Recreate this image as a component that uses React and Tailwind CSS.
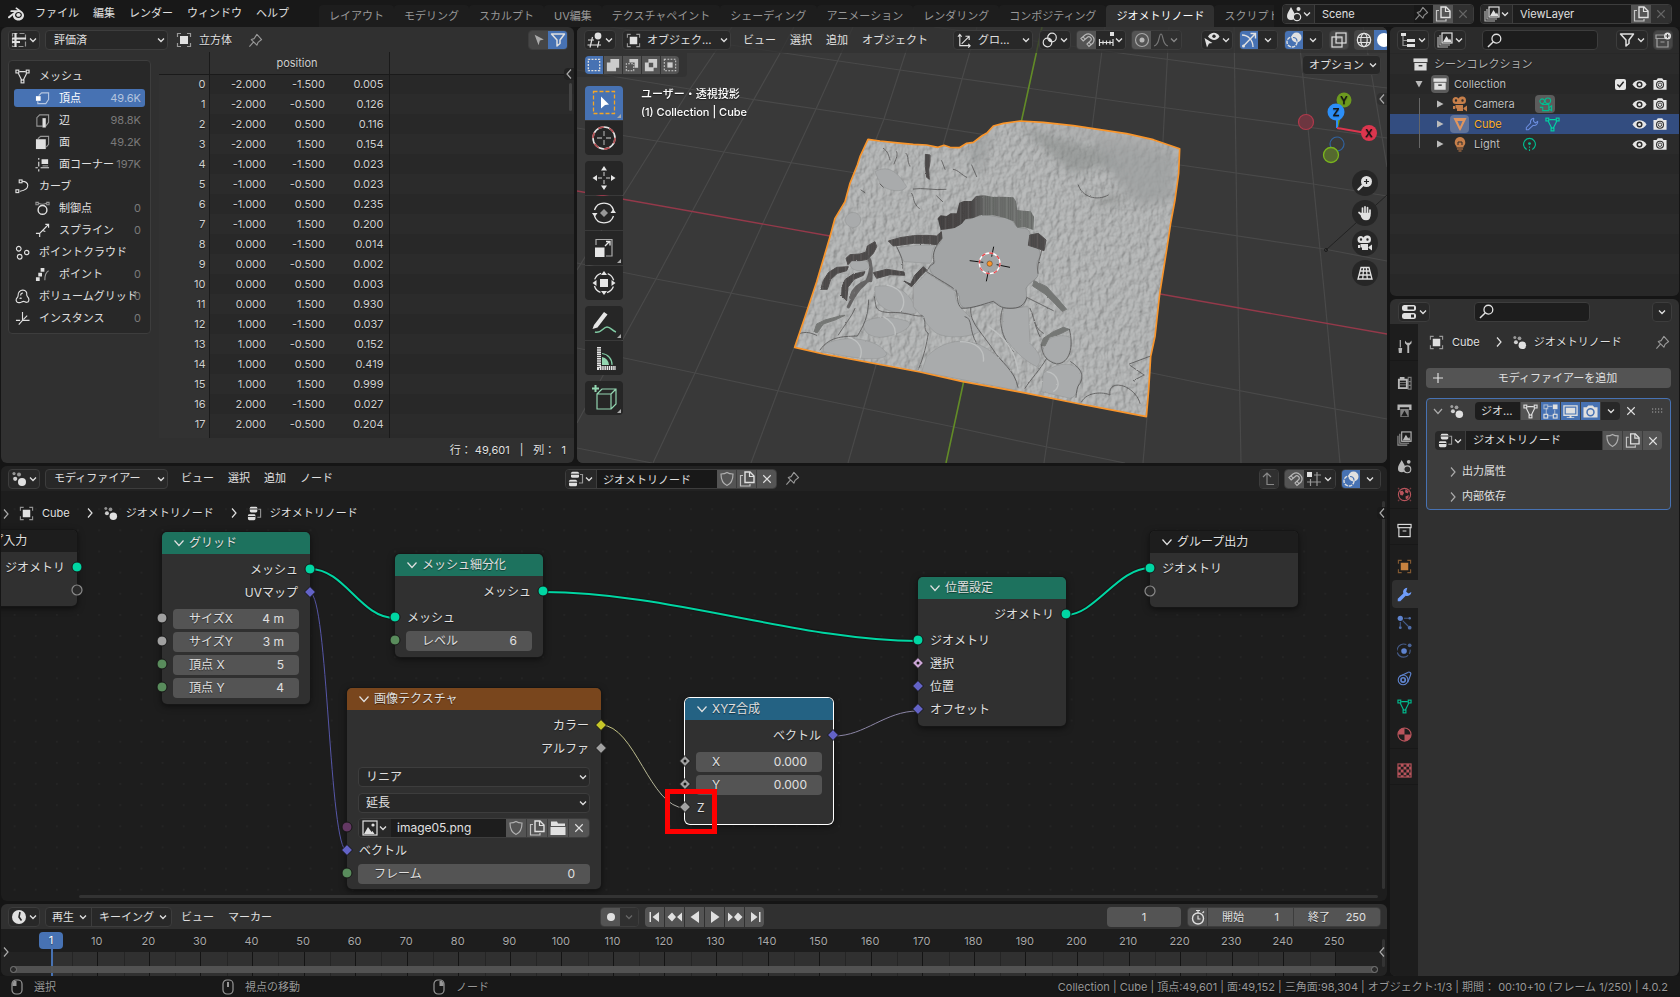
import React from "react";
import { SiBlender } from "react-icons/si";

/* ---------- icons (16 x 16 grid) ---------- */

const line = { fill: "none", stroke: "currentColor", strokeWidth: 1.2 };
const dim = { fill: "none", stroke: "currentColor", strokeWidth: 1.2, opacity: 0.6 };

const icons = {
  sheet: (
    <>
      <rect x="1.5" y="1.5" width="13" height="13" {...dim} strokeDasharray="5 2" />
      <path d="M4.5 1v14M1 6.500h14M1 10h8" fill="none" stroke="currentColor" strokeWidth="2.200" />
    </>
  ),
  object: (
    <>
      <path d="M1.500 5V1.500H5M11 1.500h3.500V5M14.500 11v3.500H11M5 14.500H1.500V11" {...dim} />
      <rect x="4" y="4" width="8" height="8" fill="currentColor" />
    </>
  ),
  pin: <path d="M1.500 14.500l4.500-5M3.500 7l6 6 1.200-3L14.500 7 9.500 1.500 6.500 6z" {...line} strokeLinejoin="round" />,
  cursor: <path d="M3 2l10.500 5.500-4.500 1L7.500 14z" fill="currentColor" />,
  filter: <path d="M1.500 2h13L10 8v3.500L7 14V8z" {...line} strokeWidth="1.500" strokeLinejoin="round" />,
  mesh: (
    <>
      <path d="M4.500 2.800h7M3.500 4.500l3.700 7.500M12.500 4.500l-3.700 7.500" {...line} />
      <rect x="1" y="1.200" width="3" height="3" {...line} />
      <rect x="12" y="1.200" width="3" height="3" {...line} />
      <rect x="6.500" y="11.800" width="3" height="3" {...line} />
    </>
  ),
  vertex: (
    <>
      <path d="M4 5L7 2h7.500v7l-3 4.500H3V11" {...dim} />
      <rect x="1" y="5.500" width="5" height="5" fill="currentColor" />
    </>
  ),
  edge: (
    <>
      <path d="M8 14H2V5l3-3h9.500v8l-3 4" {...dim} />
      <rect x="8" y="5.500" width="3.500" height="10" fill="currentColor" />
    </>
  ),
  face: (
    <>
      <path d="M3 4l3-2.500h8.500V10L12 13" {...dim} />
      <rect x="1" y="4.500" width="10.500" height="10.500" fill="currentColor" />
    </>
  ),
  corner: (
    <>
      <path d="M4 1v2M4 5v5M4 13v2.500M0.500 11.500H3M6 11.500h9" {...line} />
      <path d="M7 7.500V2.500h7v5z" fill="currentColor" />
      <path d="M8 9.500h6" {...dim} />
    </>
  ),
  curve: (
    <>
      <path d="M7.500 2.500c8-.5 9 9-2 10.500H5" {...line} />
      <rect x="4.500" y="1" width="3" height="3" {...line} />
      <rect x="1" y="11.500" width="3" height="3" {...line} />
    </>
  ),
  control: (
    <>
      <circle cx="8" cy="9.500" r="4.700" {...line} strokeWidth="1.500" />
      <path d="M4 2.500c3 1.500 5 1.500 8 0" {...dim} />
      <path d="M1 1.500h2.500V4H1zM12.500 1.500H15V4h-2.500z" {...dim} />
    </>
  ),
  spline: <path d="M1 11h4v4M5 11l7-7M8 8l3 1M11 1.500h3.500V5M14.500 1.500L11.500 4.500" {...line} />,
  cloud: (
    <>
      <circle cx="4" cy="4" r="2.500" {...line} />
      <circle cx="12.500" cy="8" r="2.300" {...line} />
      <circle cx="5" cy="12.500" r="2.500" {...line} />
    </>
  ),
  point: (
    <>
      <path d="M6 1h4v4H6zM3.500 6h4v4h-4zM1 11h4v4H1z" fill="currentColor" />
      <path d="M14.500 4c-3 1.500-4 5-4 10" {...dim} />
    </>
  ),
  volume: (
    <path
      d="M5 14.500c-3 .500-4.500-2-3.500-4s2-2 1.800-3.500C3 4 5.500 1 8.500 1.200s4.500 2.300 4 4.800c-.2 1.200.5 1.800 1.500 3 1.800 2.500.5 5-1.500 5.200-1.500.2-2.200-1-3.500-1s-2.500 1.200-4 1.300zM6 7c0-1.800 1-2.800 2.500-2.800M5 10.500c.5-1 1.500-1 2.300-.5"
      {...line}
    />
  ),
  instance: <path d="M8 1v9M8 10h7.500M1 10h4.500M8 10l-4 4.500M9 9l4-4" {...line} />,
  nodes: (
    <>
      <circle cx="3" cy="2.600" r="1.600" fill="currentColor" opacity=".6" />
      <circle cx="8" cy="3.500" r="2" fill="currentColor" opacity=".6" />
      <circle cx="4.200" cy="7.800" r="2.100" fill="currentColor" opacity=".9" />
      <circle cx="11" cy="11" r="4" fill="currentColor" />
    </>
  ),
  tree: (
    <>
      <rect x="3" y="0.800" width="8" height="6" rx="1.500" fill="currentColor" />
      <rect x="1" y="8.800" width="8" height="6.400" rx="1.500" fill="currentColor" />
      <path d="M3 3.200h8M1 11.200h8" stroke="#222" strokeWidth="1" />
      <path d="M12 3.500h2.500V12H11" {...dim} />
    </>
  ),
  shield: <path d="M8 1.500c2 1.300 4 1.500 6 1.500 0 6-1.500 9.500-6 11.500C3.500 12.500 2 9 2 3c2 0 4-.200 6-1.500z" {...line} opacity=".65" />,
  copy: (
    <>
      <path d="M6 1h5l4 4v6.500H6z" {...line} strokeWidth="1.400" />
      <path d="M10.500 1v4.500H15" {...line} />
      <path d="M4 4.500H1.500V15H11v-2" {...line} opacity=".8" />
    </>
  ),
  x: <path d="M3 3l10 10M13 3L3 13" {...line} strokeWidth="1.500" />,
  view3d: (
    <>
      <circle cx="11" cy="4" r="3.400" fill="currentColor" />
      <path d="M1 8h6M.500 13H14M5.500 5L3 15.500M12 9l-1.500 6.500" {...line} />
    </>
  ),
  orient: <path d="M3 1.500v12h11M1 4l2-2.500L5 4M12 11.500l2 2-2 2M5 11.500l8-8M9 3.500h4v4" {...line} />,
  pivot: (
    <>
      <circle cx="10" cy="5.500" r="4.300" {...line} />
      <circle cx="5.500" cy="10.500" r="4.300" {...line} />
      <circle cx="8" cy="8" r="1.500" fill="currentColor" />
    </>
  ),
  magnet: (
    <>
      <path d="M2 6.500L6 3a5.800 5.800 0 018 8L10 14.500 8 12l3.500-3.200a2.300 2.300 0 00-3.300-3.300L4.200 9z" {...line} opacity=".7" />
      <path d="M4 4.800l2.200 2.400M12 12.700l-2-2.400" {...dim} />
    </>
  ),
  increment: (
    <>
      <rect x="12" y="0" width="4" height="4" fill="currentColor" />
      <path d="M1 10.500h14M1.500 7v7M5 8.500v4M8.500 8.500v4M12 8.500v4M15 7v7" {...line} />
    </>
  ),
  prop: (
    <>
      <circle cx="8" cy="8" r="6.500" {...dim} />
      <circle cx="8" cy="8" r="2.500" fill="currentColor" opacity=".7" />
    </>
  ),
  falloff: <path d="M1 14C7 13 5.500 2 8 2s1 11 7 12" {...line} opacity=".8" />,
  eyecursor: (
    <>
      <path d="M4 4.500C7-.500 13-.500 15.500 4.500 13 9 7.500 9 4 4.500z" fill="currentColor" />
      <circle cx="10" cy="4.300" r="1.700" fill="#282828" />
      <path d="M.500 6l8 5-3.500.500L3 15.500z" fill="currentColor" />
    </>
  ),
  gizmo: (
    <>
      <path d="M1 3c6 0 11 5 11 12M2 14.500L14 2M9.500 1.500h5v5" {...line} strokeWidth="1.400" />
      <circle cx="2.500" cy="14" r="1.500" fill="currentColor" />
    </>
  ),
  overlay: (
    <>
      <circle cx="10.500" cy="5.500" r="5" fill="currentColor" />
      <circle cx="6" cy="10" r="5" {...line} strokeWidth="1.400" strokeDasharray="3.500 .9" />
      <path d="M7 5.500c2.500 0 4 1.500 4 4" fill="none" stroke="#4772b3" strokeWidth="1.200" />
    </>
  ),
  xray: (
    <>
      <rect x="5" y="1" width="10" height="10" {...line} />
      <rect x="1" y="5" width="10" height="10" {...line} />
      <path d="M5.500 8v-2h5" {...dim} />
    </>
  ),
  globe: (
    <>
      <circle cx="8" cy="8" r="6.700" {...line} />
      <ellipse cx="8" cy="8" rx="3.200" ry="6.700" {...line} />
      <path d="M2 5.500h12M2 10.500h12" {...line} />
    </>
  ),
  solid: <circle cx="8" cy="8" r="7" fill="#fff" />,
  selSet: <rect x="1.500" y="1.500" width="13" height="13" {...line} strokeDasharray="2.200 1.500" strokeWidth="1.500" />,
  selAdd: <path d="M5 1h10v10h-3.500v4H1V5h4z" fill="currentColor" />,
  selSub: (
    <>
      <path d="M5 1h10v10h-4V5H5z" fill="currentColor" />
      <path d="M9 6.500H1.500v8H10V7" {...line} strokeDasharray="2 1.400" />
    </>
  ),
  selInv: <path fillRule="evenodd" d="M5 1h10v10h-4v4H1V5h4zM5.500 5.500v5h5v-5z" fill="currentColor" />,
  selInt: (
    <>
      <rect x="1.500" y="1.500" width="13" height="13" {...line} strokeDasharray="2 1.600" />
      <rect x="5" y="5" width="6" height="6" fill="currentColor" />
    </>
  ),
  drops: (
    <>
      <path d="M5 1c2 4 4 6 4 9a4 4 0 01-8 0C1 7 3 5 5 1z" fill="currentColor" />
      <circle cx="12.500" cy="3" r="2" fill="currentColor" />
      <circle cx="11" cy="11" r="3.700" fill="#2a2a2a" stroke="currentColor" strokeWidth="1.200" />
    </>
  ),
  layers: (
    <>
      <rect x="5" y="1" width="10" height="10" {...line} />
      <path d="M6 10l3.500-6L12 8l1-1.500 1.500 3.500z" fill="currentColor" />
      <path d="M3 3v10h10M1 5v10h10" {...line} opacity=".75" />
    </>
  ),
  outliner: (
    <>
      <path d="M1 1h5v3H1zM7 7h8v3H7zM7 12h8v3H7z" fill="currentColor" />
      <path d="M3 4v9.500h4M3 8.500h4" {...dim} />
    </>
  ),
  search: (
    <>
      <circle cx="10" cy="6" r="4.700" {...line} strokeWidth="1.400" />
      <path d="M6.500 9.500L1 15" {...line} strokeWidth="1.600" />
    </>
  ),
  newcol: (
    <>
      <path d="M9 3H1v3.500h10M2 6.500V15h11V9M5.500 10h4" {...dim} />
      <circle cx="12.500" cy="4" r="3.500" fill="currentColor" />
      <path d="M12.500 2v4M10.500 4h4" stroke="#444" strokeWidth="1" />
    </>
  ),
  box: (
    <>
      <rect x="0.500" y="1.500" width="15" height="4" fill="currentColor" />
      <path d="M1.500 6.500h13v8h-13z" fill="currentColor" />
      <rect x="6" y="8.500" width="4" height="1.600" fill="#333" />
    </>
  ),
  boxline: (
    <>
      <rect x="1" y="1.500" width="14" height="3.500" {...line} />
      <path d="M2 5v9.500h12V5M6 8.500h4" {...line} />
    </>
  ),
  moviecam: (
    <>
      <path fillRule="evenodd" d="M4 1a3 3 0 012.500 1.500A4 4 0 0114 4.500 3.500 3.500 0 0110.500 8H4a3.500 3.500 0 010-7zm0 2.300a1.200 1.200 0 100 2.400 1.200 1.200 0 000-2.400zm6.500 0a1.200 1.200 0 100 2.400 1.200 1.200 0 000-2.400z" fill="currentColor" />
      <path d="M3.500 9h7.500v6H5V12.500H3.500zM11.500 12l3.500-2.500v6L11.500 13zM1 10h2v3H1z" fill="currentColor" />
    </>
  ),
  moviecamline: (
    <>
      <circle cx="4.500" cy="4.500" r="2.500" {...line} />
      <circle cx="10.500" cy="4" r="3" {...line} />
      <path d="M4 8h7.500v6.500H5V11H2M11.500 11.500l3-2v5l-3-2" {...line} />
    </>
  ),
  bulb: (
    <>
      <path d="M8 1a5.500 5.500 0 013.500 9.500v1h-7v-1A5.500 5.500 0 018 1z" fill="currentColor" />
      <path d="M6 9V6h4v3" fill="none" stroke="#2a2a2a" strokeWidth="1" />
      <path d="M5 13h6M6.500 15h3" {...line} />
    </>
  ),
  lightdata: (
    <>
      <path d="M5 13.300a6.300 6.300 0 116 0" {...line} />
      <circle cx="8" cy="7" r="1.500" fill="currentColor" />
      <path d="M8 10v1.500M8 13v2" {...line} />
    </>
  ),
  tri: <path fillRule="evenodd" d="M.500 1h15L8.500 15.500h-1zM5 4.500l3 6.500 3-6.500z" fill="currentColor" />,
  wrenchline: <path d="M10 1.500a4 4 0 00-3.500 5.300L1.500 12v2.500H4l5.200-5A4 4 0 0014.500 5l-2.800 1.800-2-2z" {...line} strokeLinejoin="round" />,
  wrench: <path d="M11 .800a4.500 4.500 0 00-4.300 6L.800 12.500v2.700h2.700l5.800-5.800a4.500 4.500 0 006-4.200l-3 1.800-2.500-2z" fill="currentColor" />,
  eye: (
    <>
      <path d="M.500 8C4 2 12 2 15.500 8 12 14 4 14 .500 8z" fill="currentColor" />
      <circle cx="8" cy="8" r="3.200" fill="#2a2a2a" />
      <circle cx="8" cy="8" r="1.600" fill="currentColor" />
    </>
  ),
  photo: (
    <>
      <path d="M.500 3.500H4L5.500 1.500h5L12 3.500h3.500v11H.500z" fill="currentColor" />
      <circle cx="8" cy="8.800" r="4" fill="none" stroke="#333" strokeWidth="1.200" />
      <circle cx="8" cy="8.800" r="2" fill="none" stroke="#333" strokeWidth="1" />
    </>
  ),
  photoblue: (
    <>
      <path d="M.500 3.500H4L5.500 1.500h5L12 3.500h3.500v11H.500z" fill="currentColor" />
      <circle cx="8" cy="8.800" r="3.700" fill="none" stroke="#4772b3" strokeWidth="1.600" />
    </>
  ),
  props: (
    <>
      <rect x="1" y="1" width="14" height="6" rx="2.500" fill="currentColor" />
      <rect x="1" y="9" width="14" height="6" rx="2.500" fill="currentColor" />
      <path d="M6.500 2.500h6.500v3H6.500zM10 10.500h3v3h-3z" fill="#282828" />
    </>
  ),
  tool: (
    <>
      <path d="M3.500 1v8" {...line} />
      <path d="M1.500 9.500h4L5 15H2z" fill="currentColor" />
      <path d="M8.500 1.500v3l2.500 2.500V15h2V7l2.500-2.500v-3l-2 2.500h-3z" fill="currentColor" />
    </>
  ),
  render: (
    <>
      <path d="M1 4h10.500v11H1zM3 2h5v2H3z" fill="currentColor" />
      <rect x="3" y="6" width="6.500" height="7" fill="#1d1d1d" />
      <path d="M3 8h6.500M3 10.500h6.500" stroke="currentColor" strokeWidth=".6" />
      <path d="M12 2.500h3V15h-3zM12 7h3M12 11h3" {...dim} />
    </>
  ),
  output: (
    <>
      <path d="M.500 1.500h15v6H13V4.500H3v3H.500z" fill="currentColor" />
      <path d="M3.500 6.500h9v8.500h-9z" fill="currentColor" opacity=".65" />
      <path d="M4.500 14L8 8l3.500 6z" fill="#1d1d1d" />
    </>
  ),
  world: (
    <>
      <circle cx="8" cy="8" r="6.500" {...line} />
      <path d="M3 4.500l3-.500 1.500 2.500L6 9 3.500 8.500zM9 2.500l3.500 2-1 2.500-3-1.500zM9 10l3.500-1.500L12 12l-2.500 1z" fill="currentColor" />
      <path d="M1 1l1.500 1.500M15 1l-1.500 1.500M1 15l1.500-1.500M15 15l-1.500-1.500" {...dim} />
    </>
  ),
  particles: (
    <>
      <circle cx="3.500" cy="3.500" r="2.800" fill="currentColor" />
      <path d="M7.500 3.500H12M3.500 7.500V12M6 6l6 6" {...dim} />
      <circle cx="13.500" cy="3.500" r="1.400" fill="currentColor" opacity=".8" />
      <circle cx="3.500" cy="13.500" r="1.500" fill="currentColor" opacity=".8" />
      <circle cx="13.500" cy="13.500" r="2" fill="currentColor" opacity=".8" />
    </>
  ),
  physics: (
    <>
      <circle cx="7.500" cy="8.500" r="3" fill="currentColor" />
      <path d="M10 1.700a7 7 0 104 5.300" {...dim} strokeDasharray="14 2" />
      <circle cx="13.500" cy="2.500" r="2" fill="currentColor" opacity=".7" />
    </>
  ),
  constraint: (
    <>
      <circle cx="6.500" cy="9.500" r="5.200" {...line} />
      <circle cx="6.500" cy="9.500" r="2.300" {...line} strokeWidth="1.800" />
      <path d="M3 5.500L11.500 1.500a2 2 0 013 2.500L11.500 12" {...line} />
    </>
  ),
  material: (
    <>
      <circle cx="8" cy="8" r="7" {...line} />
      <path d="M8 1a7 7 0 00-7 7h7zM8 8h7a7 7 0 01-7 7z" fill="currentColor" />
    </>
  ),
  texture: (
    <>
      <rect x="1" y="1" width="14" height="14" {...line} />
      <path d="M4 1h3v3H4zM10 1h3v3h-3zM1 4h3v3H1zM7 4h3v3H7zM13 4h2v3h-2zM4 7h3v3H4zM10 7h3v3h-3zM1 10h3v3H1zM7 10h3v3H7zM13 10h2v3h-2zM4 13h3v2H4zM10 13h3v2h-3z" fill="currentColor" />
    </>
  ),
  editmode: (
    <>
      <path d="M3.500 4v7M5 12.500h6M12.500 6v5M5 2.500h5" {...dim} />
      <rect x="1" y="1" width="4" height="4" {...dim} />
      <rect x="1" y="11" width="4" height="4" {...line} />
      <rect x="11" y="11" width="4" height="4" {...line} />
      <rect x="10.500" y=".500" width="5" height="5" fill="currentColor" />
    </>
  ),
  monitor: (
    <>
      <path d="M1 2h14v10H1z" {...line} strokeWidth="1.400" />
      <path d="M3 4h10v6H3zM7 12h2v2h3v1H4v-1h3z" fill="currentColor" />
    </>
  ),
  parent: <path d="M6 2v11.500h7M2 6l4-4 4 4" {...line} opacity=".5" />,
  snapgrid: (
    <>
      <rect x="1" y="1" width="5" height="5" fill="currentColor" />
      <path d="M11 1v14M4.500 8v7M8 4h7M1 11h14" {...dim} />
    </>
  ),
  image: (
    <>
      <rect x="1" y="1" width="14" height="14" {...line} />
      <path d="M2 14l4-7 3.500 5 1-1 2 3z" fill="currentColor" />
      <circle cx="11" cy="5" r="1.600" fill="currentColor" />
    </>
  ),
  folder: <path d="M1 1.500h6l1 2h7V6H1zM.500 7h15v8H.500z" fill="currentColor" />,
  clock: (
    <>
      <circle cx="8" cy="8" r="7" fill="currentColor" />
      <path d="M9 3L8 8l2.500 3.500" fill="none" stroke="#282828" strokeWidth="1.600" />
    </>
  ),
  stopwatch: (
    <>
      <circle cx="8" cy="9.500" r="5.500" {...line} strokeWidth="1.400" />
      <path d="M6 1.500h4M8 2v2M8 6.500v3.500h2.500M12.500 4L14 2.500" {...line} />
    </>
  ),
  record: <circle cx="8" cy="8" r="4" fill="currentColor" />,
  first: <path d="M2.500 3h1.500v10H2.500zM12 3v10L5.500 8z" fill="currentColor" />,
  prevkey: <path d="M5 3.500L9 8l-4 4.500L.500 8zM15 3.500v9L10 8z" fill="currentColor" />,
  rev: <path d="M12 2v12L3.500 8z" fill="currentColor" />,
  play: <path d="M4 2v12l8.500-6z" fill="currentColor" />,
  nextkey: <path d="M11 3.500L7 8l4 4.500L15.500 8zM1 3.500v9L6 8z" fill="currentColor" />,
  last: <path d="M12 3h1.500v10H12zM4 3v10l6.500-5z" fill="currentColor" />,
  mouseL: (
    <>
      <rect x="3" y="1" width="10" height="14" rx="4" {...line} />
      <path d="M3.500 7V4.500L5 2h2.500v5z" fill="currentColor" />
    </>
  ),
  mouseM: (
    <>
      <rect x="3" y="1" width="10" height="14" rx="4" {...line} />
      <rect x="7" y="3" width="2" height="5" fill="currentColor" />
    </>
  ),
  mouseR: (
    <>
      <rect x="3" y="1" width="10" height="14" rx="4" {...line} />
      <path d="M8.500 2H11l1.500 2.500V7h-4z" fill="currentColor" />
    </>
  ),
  zoom: (
    <>
      <circle cx="9.500" cy="6.500" r="5.500" fill="currentColor" />
      <path d="M9.500 4v5M7 6.500h5" stroke="#222" strokeWidth="1.200" />
      <path d="M5.500 10.500L1.500 14.500" stroke="currentColor" strokeWidth="2.400" strokeLinecap="round" />
    </>
  ),
  hand: (
    <path d="M5.500 8V3M8 7V1.800M10.500 7.500V2.500M13 9V5M4.800 10L2 7.500M4 8.500c1 5 3 6 5 6s4-2 4-6z" fill="currentColor" stroke="currentColor" strokeWidth="1.700" strokeLinecap="round" />
  ),
  persp: (
    <path d="M4 2.500h8L15 14H1zM3.200 6h9.600M2.200 10h11.600M6.700 2.500L5.700 14M9.300 2.500L10.300 14" {...line} strokeWidth="1.300" />
  ),
};

function Icon({ name, className = "size-4" }) {
  return (
    <svg viewBox="0 0 16 16" className={`shrink-0 ${className}`} aria-hidden="true">
      {icons[name]}
    </svg>
  );
}

function Chevron({ className = "" }) {
  return (
    <svg viewBox="0 0 10 10" className={`size-[10px] shrink-0 ${className}`} aria-hidden="true">
      <path d="M2 3.500l3 3 3-3" fill="none" stroke="currentColor" strokeWidth="1.300" />
    </svg>
  );
}

function Arrow({ className = "" }) {
  return (
    <svg viewBox="0 0 10 10" className={`size-[10px] shrink-0 ${className}`} aria-hidden="true">
      <path d="M3 .500L7 5 3 9.500" fill="none" stroke="currentColor" strokeWidth="1.200" />
    </svg>
  );
}

/* ---------- shared controls ---------- */

const dark = "flex h-5 shrink-0 items-center rounded border border-[#3d3d3d] bg-[#282828]";

function IconMenu({ icon, label, className = "" }) {
  return (
    <button aria-label={label} className={`${dark} w-8 justify-center gap-px ${className}`}>
      <Icon name={icon} />
      <Chevron />
    </button>
  );
}

function Pick({ label, options, className = "", pad = "pl-2" }) {
  return (
    <div className={`relative flex h-5 shrink-0 items-center ${className}`}>
      <select aria-label={label} className={`h-full w-full appearance-none rounded border border-[#3d3d3d] bg-[#282828] pr-4 ${pad}`}>
        {options.map((o) => (
          <option key={o}>{o}</option>
        ))}
      </select>
      <Chevron className="pointer-events-none absolute right-[2px]" />
    </div>
  );
}

function Square({ icon, label, tone = "bg-[#545454]", className = "w-5", size }) {
  return (
    <button aria-label={label} className={`flex h-full shrink-0 items-center justify-center ${tone} ${className}`}>
      <Icon name={icon} className={size} />
    </button>
  );
}

function Menus({ items, className = "" }) {
  return (
    <nav className={`flex shrink-0 items-center ${className}`}>
      {items.map((m) => (
        <button key={m} className="px-[7px] whitespace-nowrap">
          {m}
        </button>
      ))}
    </nav>
  );
}

const group = "flex h-5 shrink-0 items-center overflow-hidden rounded border border-[#3d3d3d]";
const ruled = "w-5 border-r border-[#3d3d3d]";

/* ---------- top bar ---------- */

const workspaces = [
  "レイアウト", "モデリング", "スカルプト", "UV編集", "テクスチャペイント", "シェーディング",
  "アニメーション", "レンダリング", "コンポジティング", "ジオメトリノード", "スクリプト作成",
];

function DataBlock({ icon, name, pin }) {
  return (
    <div className={`${group} w-48`}>
      <button aria-label={name} className="flex h-full w-8 shrink-0 items-center justify-center border-r border-[#3d3d3d] bg-[#282828]">
        <Icon name={icon} />
        <Chevron />
      </button>
      <input aria-label={`${name} 名`} defaultValue={name} className="h-full w-0 flex-1 bg-[#1d1d1d] pl-[7px]" />
      {pin && <Icon name="pin" className="mr-1 size-[15px] text-[#8a8a8a]" />}
      <Square icon="copy" label="新規" />
      <Square icon="x" label="削除" tone="bg-[#303030] text-[#666]" size="size-3" />
    </div>
  );
}

function TopBar() {
  return (
    <header className="flex h-[27px] shrink-0 items-center bg-[#181818] pr-2 pl-2">
      <SiBlender className="mr-1 size-4 shrink-0" />
      <nav className="flex shrink-0">
        {["ファイル", "編集", "レンダー", "ウィンドウ", "ヘルプ"].map((m) => (
          <button key={m} className="px-[7px] whitespace-nowrap">
            {m}
          </button>
        ))}
      </nav>
      <nav className="ml-[23px] flex w-0 flex-1 self-end overflow-hidden">
        {workspaces.map((w) => (
          <button
            key={w}
            className={`h-[22px] shrink-0 rounded-t px-[10px] whitespace-nowrap ${
              w === "ジオメトリノード" ? "bg-[#303030] text-white" : "bg-[#1d1d1d] text-[#989898]"
            }`}
          >
            {w}
          </button>
        ))}
      </nav>
      <div className="ml-2 flex gap-[6px]">
        <DataBlock icon="drops" name="Scene" pin />
        <DataBlock icon="layers" name="ViewLayer" />
      </div>
    </header>
  );
}

/* ---------- spreadsheet ---------- */

const domains = [
  ["mesh", "メッシュ", null, 0],
  ["vertex", "頂点", "49.6K", 1],
  ["edge", "辺", "98.8K", 1],
  ["face", "面", "49.2K", 1],
  ["corner", "面コーナー", "197K", 1],
  ["curve", "カーブ", null, 0],
  ["control", "制御点", "0", 1],
  ["spline", "スプライン", "0", 1],
  ["cloud", "ポイントクラウド", null, 0],
  ["point", "ポイント", "0", 1],
  ["volume", "ボリュームグリッド", "0", 0],
  ["instance", "インスタンス", "0", 0],
];

const rows = [
  ["-2.000", "-1.500", "0.005"], ["-2.000", "-0.500", "0.126"], ["-2.000", "0.500", "0.116"],
  ["-2.000", "1.500", "0.154"], ["-1.000", "-1.500", "0.023"], ["-1.000", "-0.500", "0.023"],
  ["-1.000", "0.500", "0.235"], ["-1.000", "1.500", "0.200"], ["0.000", "-1.500", "0.014"],
  ["0.000", "-0.500", "0.002"], ["0.000", "0.500", "0.003"], ["0.000", "1.500", "0.930"],
  ["1.000", "-1.500", "0.037"], ["1.000", "-0.500", "0.152"], ["1.000", "0.500", "0.419"],
  ["1.000", "1.500", "0.999"], ["2.000", "-1.500", "0.027"], ["2.000", "-0.500", "0.204"],
];

function Spreadsheet() {
  return (
    <section className="relative flex min-h-0 min-w-0 flex-col overflow-hidden rounded-md bg-[#303030]">
      <div className="flex h-[25px] shrink-0 items-center pt-px pr-[6px] pl-[7px]">
        <IconMenu icon="sheet" label="エディタータイプ" />
        <Pick label="オブジェクト評価状態" options={["評価済", "オリジナル"]} className="ml-[5px] w-[123px]" />
        <Icon name="object" className="ml-2 size-4" />
        <span className="ml-[7px]">立方体</span>
        <Icon name="pin" className="ml-4 size-[15px] text-[#989898]" />
        <div className={`${group} ml-auto`}>
          <Square icon="cursor" label="選択のみ" tone="bg-[#464646] text-[#aaa]" className="w-[19px]" size="size-[14px]" />
          <Square icon="filter" label="フィルター" tone="bg-[#4772b3]" className="w-[19px]" />
        </div>
      </div>
      <div className="flex min-h-0 flex-1">
        <div className="w-[158px] shrink-0 pt-2 pl-[7px]">
          <ul className="w-[143px] rounded border border-[#3d3d3d] bg-[#282828] px-[5px] pt-1 pb-1">
            {domains.map(([icon, label, count, depth]) => (
              <li key={label} className="flex h-[22px] items-center">
                <button
                  className={`flex h-[18px] w-full items-center rounded-[3px] pr-1 whitespace-nowrap ${depth ? "pl-[21px]" : "pl-px"} ${
                    label === "頂点" ? "bg-[#4772b3] text-white" : ""
                  }`}
                >
                  <Icon name={icon} className="size-[15px]" />
                  <span className="ml-[9px] w-0 flex-1 text-left">{label}</span>
                  {count && <span className={label === "頂点" ? "text-[#b4c4de]" : "text-[#7a7a7a]"}>{count}</span>}
                </button>
              </li>
            ))}
          </ul>
        </div>
        <div className="min-w-0 flex-1 overflow-hidden bg-[#2a2a2a]">
          <table className="w-full table-fixed border-collapse text-right text-[#cfcfcf]">
            <colgroup>
              <col className="w-[50px]" />
              <col className="w-[62px]" />
              <col className="w-[59px]" />
              <col className="w-[59px]" />
              <col />
            </colgroup>
            <thead>
              <tr className="h-[22px] border-b border-[#1a1a1a] bg-[#303030]">
                <th className="border-r border-[#1a1a1a]" />
                <th colSpan={3} className="border-r border-[#1a1a1a] pr-1 text-center font-normal">
                  position
                </th>
                <th />
              </tr>
            </thead>
            <tbody>
              {rows.map((r, i) => (
                <tr key={i} className={`h-5 ${i % 2 ? "bg-[#2b2b2b]" : "bg-[#282828]"}`}>
                  <td className="border-r border-[#1a1a1a] bg-[#323232] pr-[3px]">{i}</td>
                  <td className="pr-[5px]">{r[0]}</td>
                  <td className="pr-[5px]">{r[1]}</td>
                  <td className="border-r border-[#1a1a1a] pr-[5px]">{r[2]}</td>
                  <td />
                </tr>
              ))}
              <tr className="h-5">
                <td className="border-r border-[#1a1a1a] bg-[#323232]" />
                <td colSpan={3} className="border-r border-[#1a1a1a]" />
                <td />
              </tr>
            </tbody>
          </table>
        </div>
      </div>
      <footer className="flex h-[25px] shrink-0 items-center justify-end gap-[10px] pr-2">
        <span>行：&nbsp;49,601</span>
        <span>|</span>
        <span>列：&nbsp;&nbsp;1</span>
      </footer>
      <button aria-label="サイドバー" className="absolute top-[41px] right-0 rounded-l bg-[#222] py-px text-[#aaa]">
        <Arrow className="size-2 rotate-180" />
      </button>
      <i className="absolute top-14 right-[2px] h-7 w-[3px] rounded bg-[#444]" />
    </section>
  );
}

/* ---------- 3D viewport ---------- */

const gridLines = [
  "M934 27L1127 54 1293 76 1387 88",
  "M610 27L784 53 900 70 1027 88 1130 103 1234 117 1387 138",
  "M577 70L629 79 750 99 884 119 1180 165 1313 184 1387 196",
  "M577 128L724 152 856 173 1172 226 1324 249 1387 261",
  "M577 263L656 279 804 307 1152 373 1200 383 1387 419",
  "M577 348L695 373 779 391 954 427 1047 447 1125 463",
  "M577 448L652 463",
  "M732 27L713 55 688 92 624 194 577 270",
  "M794 27L779 55 724 152 656 279 577 423",
  "M853 27L816 109 763 223 695 373 653 463",
  "M914 27L884 119 794 348 751 463",
  "M977 27L943 145 876 365 848 463",
  "M1105 27L1092 128 1053 401 1044 463",
  "M1169 27L1163 140 1147 417 1143 463",
  "M1234 27L1238 300 1241 463",
  "M1298 27L1325 300 1340 463",
  "M1363 27L1372 77 1387 167",
];

const meshOutline =
  "M264 148L300 153 345 158 400 163 440 165 474 172 492 166 510 172 538 173 560 160 580 157 605 138 622 128 640 108 670 100 720 93 790 97 880 107 1040 131 1120 149 1199 176 1196 250 1185 330 1172 400 1160 480 1139 612 1125 740 1112 800 1106 900 1099 980 900 942 730 908 545 874 420 846 130 792 44 772 75 680 110 575 150 440 165 385 195 335 210 280 232 225 240 200z";

const craterWall =
  "M473 385L482 376 500 378 512 370 530 370 538 338 552 333 575 333 588 318 612 316 640 321 668 320 700 322 708 334 712 360 730 362 752 364 762 380 760 420 735 412 712 413 700 394 675 384 640 376 600 376 580 384 556 388 545 402 524 414 500 418 482 420z";

const cliffs = [
  "M750 435L775 430 798 450 792 482 770 474 745 466z",
  "M325 453L360 443 400 437 440 436 470 438 484 425 486 445 470 464 430 460 400 460 370 464 340 468z",
  "M198 505L210 494 240 492 258 486 262 468 285 455 290 470 280 490 262 508 240 512 215 512 204 524z",
  "M122 598L130 572 145 548 170 532 205 530 200 542 172 550 152 568 142 598z",
  "M185 618L186 590 196 568 220 552 255 545 250 556 222 568 204 592 200 632z",
  "M280 548L320 538 372 546 374 556 330 554 290 565z",
  "M370 572L392 582 404 556 430 530 440 540 420 560 395 590z",
  "M436 193L450 195 450 215 446 240 448 268 440 262 436 230z",
];

const ridges = [
  "M762 572L800 590 832 625 860 658 846 664 820 636 795 612 758 588z",
  "M102 726L110 702 135 690 180 678 195 676 165 690 130 702 112 728z",
  "M783 765L790 745 820 725 850 712 868 718 840 732 808 742 795 768z",
];

const wideCreases =
  "M272 535C268 555 268 570 250 585 230 600 218 625 205 650M264 500C276 520 274 545 272 572M212 622C218 600 235 582 265 572";

const creases = [
  "M350 470C365 500 370 515 368 535M474 460C455 490 460 505 462 520 450 525 445 535 440 545",
  "M440 545C470 565 500 580 520 595M528 600C535 620 528 640 545 655",
  "M572 655C570 700 600 720 640 780 660 815 705 840 714 892",
  "M425 675C445 690 425 720 445 730 440 760 432 800 415 838",
  "M668 655C655 690 662 740 700 785",
  "M750 655C770 700 760 710 790 730M555 680C580 685 565 720 590 760",
  "M266 630C265 680 250 710 232 738 200 740 150 735 120 780M225 655C215 680 190 710 175 735",
  "M283 620C290 650 280 665 330 668 380 665 400 680 425 678",
  "M740 622L820 662M785 480C780 510 770 520 774 550",
  "M545 655C580 655 600 645 640 634 655 645 660 655 690 655 715 655 730 650 740 625",
  "M800 805C780 840 750 870 735 895M785 765C785 800 805 815 830 822 870 820 882 770 868 718",
  "M905 935C920 905 970 905 990 915 985 880 1020 880 1045 895 1060 905 1075 920 1080 940",
  "M1048 822L1112 798M1060 872L1092 855M1050 826L1092 855",
  "M872 815C910 840 910 860 900 880 890 890 890 905 888 922M895 285C905 320 950 335 985 315",
  "M310 175C325 185 325 195 330 210M350 185C355 200 345 210 342 222M378 190C388 200 380 215 390 228M485 212L495 238M520 238C535 240 545 255 560 262M395 310C405 325 395 335 418 356M470 318L488 335",
  "M300 282L310 292M243 300L255 308M400 297C430 292 460 302 498 298M55 732C80 722 95 730 110 736M762 690C768 710 772 725 780 740M575 225L590 260",
];

const lightCurves =
  "M320 585C375 595 380 640 360 665M310 680C330 690 350 710 345 735M205 742C240 750 250 780 240 805M540 755C590 755 615 780 610 815M625 710C690 750 710 800 715 850M800 845C835 850 845 890 820 905";

const smooth = [
  "M285 590C340 580 380 600 400 640 400 660 430 675 380 670 310 670 280 640 285 590z",
  "M130 770C150 740 280 730 320 790 320 810 260 815 130 785z",
  "M250 700C270 680 330 675 385 695 400 705 370 735 300 742 260 740 250 720 250 700z",
  "M440 800C500 740 580 740 640 790 700 830 720 880 705 900L425 845z",
  "M670 655L745 650 750 760C780 790 790 810 770 830 730 810 700 780 665 730z",
  "M790 770C800 735 860 730 872 745 875 790 860 820 830 820 800 810 790 800 790 770z",
  "M790 850C850 800 900 830 908 850 890 890 895 920 870 925L785 905z",
  "M400 590C420 570 430 560 440 548 470 570 510 590 525 605 525 630 535 645 545 657 570 680 590 700 600 725 560 745 500 745 470 730 440 710 430 680 400 650z",
  "M195 390C200 360 240 360 242 390 240 420 200 420 195 390z",
  "M285 245C320 225 350 240 380 290 370 310 320 305 300 280z",
  "M350 474C390 466 430 464 465 466 450 490 460 505 450 520L372 515z",
  "M210 512C230 506 255 508 262 516 275 530 260 540 250 542 225 545 205 535 210 512z",
];

const crater =
  "M482 418C500 420 520 414 530 408 545 402 548 390 560 387 575 388 580 380 600 377 620 374 640 378 660 382 680 380 695 388 703 400 708 415 725 414 738 416 750 420 752 432 747 445 742 460 750 468 770 474 785 480 782 500 772 515 768 535 778 545 772 560 760 575 745 580 738 595 740 615 742 635 728 650 705 656 680 656 665 650 655 640 640 633 625 645 600 645 580 652 560 655 545 655 535 640 538 620 528 598 500 585 470 565 440 540 445 520 465 515 460 500 458 480 470 470 480 462 490 445 482 432z";

function Scene() {
  return (
    <svg viewBox="577 27 810 436" preserveAspectRatio="xMidYMid slice" className="absolute inset-0 h-full w-full" aria-hidden="true">
      <defs>
        <filter id="rough" x="0" y="0" width="100%" height="100%">
          <feTurbulence type="fractalNoise" baseFrequency="0.060 0.045" numOctaves="4" seed="7" result="n" />
          <feDiffuseLighting in="n" surfaceScale="5" diffuseConstant="1.200" lightingColor="#b0b2b2" result="l">
            <feDistantLight azimuth="215" elevation="58" />
          </feDiffuseLighting>
          <feComposite in="l" in2="SourceGraphic" operator="in" />
        </filter>
        <filter id="soft" x="-20%" y="-20%" width="140%" height="140%">
          <feGaussianBlur stdDeviation="12" />
        </filter>
        <filter id="jag" x="-10%" y="-10%" width="120%" height="120%">
          <feTurbulence type="fractalNoise" baseFrequency="0.150" numOctaves="2" seed="3" />
          <feDisplacementMap in="SourceGraphic" scale="5" xChannelSelector="R" yChannelSelector="G" />
        </filter>
        <linearGradient id="wall" x1="0" x2="1">
          <stop offset="0" stopColor="#454242" />
          <stop offset=".35" stopColor="#4c4949" />
          <stop offset=".5" stopColor="#6c6e6c" />
          <stop offset="1" stopColor="#757875" />
        </linearGradient>
        <pattern id="ribs" width="23" height="20" patternUnits="userSpaceOnUse">
          <path d="M2 0v20M8 0v20M19 0v20" stroke="#2b2929" strokeOpacity=".3" strokeWidth="2" />
          <path d="M13 0v20" stroke="#999" strokeOpacity=".25" strokeWidth="2" />
        </pattern>
        <clipPath id="meshClip">
          <path d={meshOutline} />
        </clipPath>
      </defs>
      <rect x="577" y="27" width="810" height="436" fill="#393939" />
      <g fill="none" stroke="#494949" strokeWidth="1.200">
        {gridLines.map((d) => (
          <path key={d} d={d} />
        ))}
      </g>
      <path d="M577 191L830 236 1160 294 1387 334" fill="none" stroke="#94394a" strokeWidth="1.400" />
      <path d="M1042 27L1021 123M964 380L946 463" fill="none" stroke="#628b27" strokeWidth="1.600" />
      <path d="M1326 250L1387 195" stroke="#222" strokeWidth="1" />
      <circle cx="1326" cy="250" r="1.500" fill="none" stroke="#1c1c1c" />
      <g transform="translate(780 90) scale(.333333)">
        <path d={meshOutline} fill="#a9abab" />
        <g clipPath="url(#meshClip)">
          <path d={meshOutline} fill="#aaa" filter="url(#rough)" opacity=".8" />
          <g filter="url(#soft)">
            <path d="M720 110L860 150 960 180 1040 250 960 230 880 250 830 210z" fill="#858887" opacity=".55" />
            <path d="M940 150L1190 190 1180 330 1080 350 1020 290z" fill="#9a9d9c" opacity=".7" />
            <path d="M895 290L940 335 1000 310 1050 330 960 350z" fill="#858786" opacity=".5" />
            <path d="M720 95L1100 140 1190 175 1000 165z" fill="#a6a8a8" opacity=".8" />
            <path d="M560 180L640 110 600 260z" fill="#929493" opacity=".5" />
          </g>
          <g fill="#a9abac" stroke="#8f9191" strokeWidth="1.500" filter="url(#jag)">
            {smooth.map((d) => (
              <path key={d} d={d} />
            ))}
          </g>
          <g filter="url(#jag)">
            <path d={crater} fill="#a2a4a5" stroke="#7d7f7f" strokeWidth="1.500" />
            <path d={craterWall} fill="url(#wall)" />
            <g fill="#504d4d" stroke="#504d4d" strokeWidth="3" strokeLinejoin="round">
              {cliffs.map((d) => (
                <path key={d} d={d} />
              ))}
            </g>
            <g fill="#757775" stroke="#757775" strokeWidth="3" strokeLinejoin="round">
              {ridges.map((d) => (
                <path key={d} d={d} />
              ))}
            </g>
            <path d={craterWall + cliffs.join("")} fill="url(#ribs)" />
            <g fill="none" stroke="#4f4e4e" strokeWidth="3" opacity=".75" strokeLinecap="round">
              <path d={wideCreases} strokeWidth="10" />
              {creases.map((d) => (
                <path key={d} d={d} />
              ))}
            </g>
            <path d={lightCurves} fill="none" stroke="#bfc1c1" strokeWidth="4" />
          </g>
        </g>
        <path d={meshOutline} fill="none" stroke="#f9952b" strokeWidth="5" strokeLinejoin="round" />
        <path d="M569 512L610 517M650 524L690 532M641 470L635 500M625 545L619 574" stroke="#111" strokeWidth="3" />
        <circle cx="629" cy="520" r="31" fill="none" stroke="#fff" strokeWidth="4" />
        <circle cx="629" cy="520" r="31" fill="none" stroke="#e8474c" strokeWidth="4" strokeDasharray="12 12" />
        <circle cx="629" cy="521" r="8" fill="#f9952b" stroke="#432" strokeWidth="1.500" />
      </g>
    </svg>
  );
}

const toolArt = {
  select: (
    <>
      <rect x="8.500" y="5.500" width="21" height="22" fill="none" stroke="#f5a623" strokeWidth="1.300" strokeDasharray="4 2" />
      <path d="M16 10.500l8 8-4 .500-4 3.500z" fill="#fff" />
    </>
  ),
  cursor: (
    <>
      <circle cx="19" cy="17" r="11" fill="none" stroke="#e6e6e6" strokeWidth="1.600" />
      <circle cx="19" cy="17" r="11" fill="none" stroke="#b2484c" strokeWidth="1.600" strokeDasharray="5.700 5.700" />
      <path d="M12 17h5M21 17h5M19 10v5M19 19v5" stroke="#999" strokeWidth="1.300" />
    </>
  ),
  move: (
    <>
      <path d="M19 5l3 4.500h-6zM19 29l3-4.500h-6zM7.500 17l4.500-3v6zM30.500 17L26 14v6z" fill="#e6e6e6" />
      <path d="M19 11v4M19 19v4M13 17h4M21 17h4" stroke="#999" strokeWidth="1.500" />
    </>
  ),
  rotate: (
    <>
      <path d="M9.500 14a10 10 0 0119 0M28.500 20a10 10 0 01-19 0" fill="none" stroke="#e6e6e6" strokeWidth="1.300" />
      <path d="M7 17h5.500l-2.800 4zM25.500 17H31l-2.800-4z" fill="#e6e6e6" />
      <path d="M19 13l4 4-4 4-4-4z" fill="#999" />
    </>
  ),
  scale: (
    <>
      <path d="M11 14V8.500h16V25h-6" fill="none" stroke="#aaa" strokeWidth="1.200" />
      <rect x="10" y="16.500" width="9.500" height="9.500" fill="#e6e6e6" />
      <path d="M20 15l4-4M21 10.500h4v4" fill="none" stroke="#e6e6e6" strokeWidth="1.300" />
    </>
  ),
  transform: (
    <>
      <circle cx="19" cy="17" r="10" fill="none" stroke="#e6e6e6" strokeWidth="1.300" strokeDasharray="9 6.700" strokeDashoffset="-3.500" />
      <rect x="15" y="13" width="8" height="8" fill="#e6e6e6" />
      <path d="M19 5l3 4h-6zM19 29l3-4h-6zM7.500 17l4-3v6zM30.500 17l-4-3v6z" fill="#e6e6e6" />
    </>
  ),
  annotate: (
    <>
      <path d="M9 19L19 6l3.500 2.500L12.500 21.500 7.500 23z" fill="#e6e6e6" />
      <path d="M10 26c6 2 8-5 12-5s5 4 9 5" fill="none" stroke="#7fc9a2" strokeWidth="1.500" />
    </>
  ),
  measure: (
    <>
      <path d="M14 6v21h17" fill="none" stroke="#e6e6e6" strokeWidth="4" strokeDasharray="1.500 .700" />
      <path d="M17 24v-8a9 9 0 017 8z" fill="#93d6b1" />
      <path d="M17 12.500a11 11 0 0110 11.500" fill="none" stroke="#7fc9a2" strokeWidth="1.200" />
    </>
  ),
  addcube: (
    <>
      <path d="M12 13h14v15H12zM12 13l5-5h14v15l-5 5M26 13l5-5" fill="none" stroke="#93d6b1" strokeWidth="1.200" />
      <path d="M10.500 4v7M7 7.500h7" stroke="#93d6b1" strokeWidth="2" />
    </>
  ),
};

const toolGroups = [
  [["select", "ボックス選択", true], ["cursor", "カーソル", false]],
  [["move", "移動", false], ["rotate", "回転", false], ["scale", "スケール", true], ["transform", "トランスフォーム", false]],
  [["annotate", "アノテート", true], ["measure", "メジャー", false]],
  [["addcube", "立方体を追加", true]],
];

function Gizmo() {
  return (
    <svg viewBox="1290 85 94 84" className="absolute top-[58px] right-[3px] h-[84px] w-[94px]" aria-hidden="true">
      <path d="M1337 128L1343 102" stroke="#6d9a1f" strokeWidth="2" />
      <circle cx="1344" cy="100" r="7.500" fill="#6d9a1f" />
      <path d="M1337 128V113" stroke="#2c8ff8" strokeWidth="2" />
      <path d="M1337 128L1366 133" stroke="#dc364e" strokeWidth="2" />
      <circle cx="1306" cy="122" r="7.500" fill="#6d3640" stroke="#b03a4c" strokeWidth="1.200" />
      <circle cx="1337" cy="144" r="7" fill="none" stroke="#31639f" strokeWidth="1.200" />
      <circle cx="1331" cy="155" r="7.500" fill="#55692f" stroke="#7ab51d" strokeWidth="1.300" />
      <circle cx="1336" cy="112" r="8.500" fill="#2c8ff8" />
      <circle cx="1369" cy="133" r="8" fill="#dc364e" />
      <g fontSize="11" fontWeight="600" textAnchor="middle" fill="#151515">
        <text x="1344" y="104">Y</text>
        <text x="1336" y="116">Z</text>
        <text x="1369" y="137">X</text>
      </g>
    </svg>
  );
}

function Viewport() {
  return (
    <section className="relative min-h-0 min-w-0 overflow-hidden rounded-md bg-[#393939]">
      <Scene />
      <div className="relative flex h-[26px] items-center overflow-hidden bg-[#303030]/70 pl-[7px]">
        <IconMenu icon="view3d" label="エディタータイプ" />
        <div className="relative ml-[6px] flex items-center">
          <Pick label="モード" options={["オブジェク…"]} className="w-[109px]" pad="pl-6" />
          <Icon name="object" className="pointer-events-none absolute left-1 size-[15px]" />
        </div>
        <Menus items={["ビュー", "選択", "追加", "オブジェクト"]} className="ml-[5px]" />
        <div className="relative ml-[18px] flex items-center">
          <Pick label="座標系" options={["グロ…"]} className="w-20" pad="pl-6" />
          <Icon name="orient" className="pointer-events-none absolute left-1 size-[15px]" />
        </div>
        <IconMenu icon="pivot" label="ピボット" className="ml-[6px]" />
        <div className={`${group} ml-[5px]`}>
          <Square icon="magnet" label="スナップ" className="w-[19px]" />
          <button aria-label="スナップ先" className="flex h-full w-[29px] items-center justify-center bg-[#282828]">
            <Icon name="increment" />
            <Chevron />
          </button>
        </div>
        <div className={`${group} ml-[5px]`}>
          <Square icon="prop" label="プロポーショナル編集" className="w-[19px]" />
          <button aria-label="減衰" className="flex h-full w-[30px] items-center justify-center bg-[#303030] text-[#888]">
            <Icon name="falloff" />
            <Chevron />
          </button>
        </div>
        <div className="ml-auto flex">
          <IconMenu icon="eyecursor" label="表示状態" />
          <div className={`${group} ml-[6px]`}>
            <Square icon="gizmo" label="ギズモ" tone="bg-[#4772b3]" className="w-[18px]" />
            <button aria-label="ギズモ設定" className="flex h-full w-[19px] items-center justify-center bg-[#282828]">
              <Chevron />
            </button>
          </div>
          <div className={`${group} ml-[6px]`}>
            <Square icon="overlay" label="オーバーレイ" tone="bg-[#4772b3]" className="w-[18px]" />
            <button aria-label="オーバーレイ設定" className="flex h-full w-[19px] items-center justify-center bg-[#282828]">
              <Chevron />
            </button>
          </div>
          <div className={`${group} ml-[6px]`}>
            <Square icon="xray" label="透過表示" tone="bg-[#464646]" className="w-[18px]" />
          </div>
          <div className="ml-[5px] flex h-5 overflow-hidden rounded-l">
            <Square icon="globe" label="ワイヤーフレーム" tone="bg-[#464646]" />
            <div className="w-[13px] overflow-hidden">
              <Square icon="solid" label="ソリッド" tone="bg-[#4772b3]" />
            </div>
          </div>
        </div>
      </div>
      <div className="relative flex h-6 items-center justify-between pr-[6px]">
        <div className="flex h-full items-center rounded-br bg-[#303030]/60 px-2">
          <div className="flex h-[18px] gap-px overflow-hidden rounded">
            <Square icon="selSet" label="新規選択" tone="bg-[#4772b3]" className="w-[18px]" size="size-[14px]" />
            <Square icon="selAdd" label="選択を追加" tone="bg-[#545454] text-[#ccc]" className="w-[18px]" size="size-[14px]" />
            <Square icon="selSub" label="選択を減算" tone="bg-[#545454] text-[#ccc]" className="w-[18px]" size="size-[14px]" />
            <Square icon="selInv" label="選択を反転" tone="bg-[#545454] text-[#ccc]" className="w-[18px]" size="size-[14px]" />
            <Square icon="selInt" label="選択の交差" tone="bg-[#545454] text-[#ccc]" className="w-[18px]" size="size-[14px]" />
          </div>
        </div>
        <button className={`${dark} w-[79px] justify-between pr-[2px] pl-[6px] whitespace-nowrap`}>
          オプション
          <Chevron />
        </button>
      </div>
      <div className="relative flex pt-2 pl-2">
        <div className="flex flex-col gap-[6px] pt-px">
          {toolGroups.map((g) => (
            <div key={g[0][0]} className="flex flex-col gap-px overflow-hidden rounded">
              {g.map(([name, label, more]) => (
                <button key={name} aria-label={label} className={`h-[34px] w-[38px] ${name === "select" ? "bg-[#4772b3]" : "bg-[#262626]"}`}>
                  <svg viewBox="0 0 38 34" className="h-[34px] w-[38px]" aria-hidden="true">
                    {toolArt[name]}
                    {more && <path d="M36 28v4h-4z" fill="#aaa" />}
                  </svg>
                </button>
              ))}
            </div>
          ))}
        </div>
        <div className="pl-[18px] leading-[18px] font-medium text-white">
          <p>ユーザー・透視投影</p>
          <p>(1) Collection | Cube</p>
        </div>
      </div>
      <Gizmo />
      <div className="absolute top-[143px] right-[9px] flex flex-col gap-1">
        {[["zoom", "ズーム"], ["hand", "パン"], ["moviecam", "カメラ視点"], ["persp", "透視投影切替"]].map(([i, l]) => (
          <button key={i} aria-label={l} className="flex size-[26px] items-center justify-center rounded-full bg-[#262626]">
            <Icon name={i} />
          </button>
        ))}
      </div>
      <button aria-label="サイドバー" className="absolute top-[66px] right-0 rounded-l bg-[#303030] py-px text-[#aaa]">
        <Arrow className="size-2 rotate-180" />
      </button>
    </section>
  );
}

/* ---------- node editor ---------- */

function Socket({ side = "in", shape = "circle", color }) {
  return (
    <svg
      viewBox="0 0 14 14"
      className={`absolute top-1 z-10 size-[14px] ${side === "in" ? "-left-[7px]" : "-right-[7px]"}`}
      aria-hidden="true"
    >
      {shape === "circle" && <circle cx="7" cy="7" r="5" fill={color} stroke="#161616" strokeWidth="1" />}
      {shape === "ring" && <circle cx="7" cy="7" r="5" fill="#2a2a2a" stroke="#8a8a8a" strokeWidth="1.200" />}
      {(shape === "diamond" || shape === "dot") && <path d="M7 1.500L12.500 7 7 12.500 1.500 7z" fill={color} stroke="#161616" strokeWidth="1" />}
      {shape === "dot" && <circle cx="7" cy="7" r="1.500" fill="#161616" />}
    </svg>
  );
}

function Node({ title, head, className, children }) {
  return (
    <article className={`absolute rounded-[5px] bg-[#303030] pb-1 text-[12px] shadow-[0_2px_7px_rgba(0,0,0,.6)] ring-1 ${className}`}>
      <h3 className={`mb-1 flex h-[22px] items-center gap-[5px] rounded-t-[5px] pl-3 whitespace-nowrap ${head}`}>
        <svg viewBox="0 0 10 10" className="size-[10px]" aria-hidden="true">
          <path d="M.500 2.500L5 7.500l4.500-5" fill="none" stroke="currentColor" strokeWidth="1.200" />
        </svg>
        {title}
      </h3>
      {children}
    </article>
  );
}

function Out({ label, ...s }) {
  return (
    <div className="relative flex h-[23px] items-center justify-end pr-3">
      {label}
      <Socket side="out" {...s} />
    </div>
  );
}

function In({ label, ...s }) {
  return (
    <div className="relative flex h-[23px] items-center pl-3">
      {label}
      <Socket {...s} />
    </div>
  );
}

function Field({ label, value, ...s }) {
  return (
    <div className="relative flex h-[23px] items-center px-[11px]">
      <label className="flex h-5 flex-1 items-center rounded bg-[#545454] pr-[15px] pl-4">
        <span className="whitespace-nowrap">{label}</span>
        <input defaultValue={value} className="h-full w-0 flex-1 bg-transparent text-right" />
      </label>
      <Socket {...s} />
    </div>
  );
}

const geo = "#00d6a3";
const vec = "#6363c7";
const int = "#598c5c";
const flt = "#a1a1a1";
const darkRing = "ring-[#161616]";

function Links() {
  return (
    <svg className="absolute inset-0 h-full w-full" aria-hidden="true">
      <defs>
        <pattern id="dots" width="21.140" height="21.140" patternUnits="userSpaceOnUse" x="66.500" y="134.500">
          <circle cx="10.500" cy="10.500" r=".9" fill="#272727" />
        </pattern>
        <linearGradient id="colorToZ" x1="0" x2="1">
          <stop offset="0" stopColor="#c7c77a" />
          <stop offset="1" stopColor="#a9a9a9" />
        </linearGradient>
      </defs>
      <rect width="100%" height="100%" fill="url(#dots)" />
      <g transform="translate(-1 -491)" fill="none">
        <g stroke="#151515" strokeWidth="4">
          <path d="M310 569C345 569 360 618 395 618M543 592C670 592 800 641 918 641M1066 615C1095 615 1118 568 1150 568" />
        </g>
        <g stroke={geo} strokeWidth="2">
          <path d="M310 569C345 569 360 618 395 618" />
          <path d="M543 592C670 592 800 641 918 641" />
          <path d="M1066 615C1095 615 1118 568 1150 568" />
        </g>
        <path d="M310 593C328 593 329 851 347 851" stroke="#5656a8" />
        <path d="M601 725C635 725 650 808 685 808" stroke="url(#colorToZ)" />
        <path d="M834 736C865 736 885 711 918 711" stroke="#8c86a6" />
      </g>
    </svg>
  );
}

function Crumb({ icon, children }) {
  return (
    <span className="flex items-center gap-2">
      <Icon name={icon} className="size-[15px]" />
      {children}
    </span>
  );
}

function NodeEditor() {
  return (
    <section className="flex min-h-0 min-w-0 flex-col overflow-hidden rounded-md bg-[#1d1d1d]">
      <div className="grid h-[25px] shrink-0 grid-cols-[564px_1fr_auto] items-center bg-[#222]">
        <div className="flex items-center pl-[7px]">
          <IconMenu icon="nodes" label="エディタータイプ" />
          <Pick label="ノードツリーのサブタイプ" options={["モディファイアー", "ツール"]} className="ml-[5px] w-[123px]" />
          <Menus items={["ビュー", "選択", "追加", "ノード"]} className="ml-[6px]" />
        </div>
        <div className="flex items-center">
          <div className={`${group} w-[212px]`}>
            <button aria-label="ノードツリー" className="flex h-full w-[31px] shrink-0 items-center justify-center border-r border-[#3d3d3d] bg-[#282828]">
              <Icon name="tree" />
              <Chevron />
            </button>
            <input aria-label="ノードツリー名" defaultValue="ジオメトリノード" className="h-full w-0 flex-1 bg-[#181818] pl-[6px]" />
            <Square icon="shield" label="フェイクユーザー" className={ruled} />
            <Square icon="copy" label="新規" className={ruled} />
            <Square icon="x" label="リンク解除" className="w-[19px]" size="size-3" />
          </div>
          <Icon name="pin" className="ml-2 size-[15px] text-[#989898]" />
        </div>
        <div className="flex items-center gap-[5px] pr-[6px]">
          <div className={group}>
            <Square icon="parent" label="親ノードツリー" tone="bg-[#303030]" className="w-[18px]" />
          </div>
          <div className={group}>
            <Square icon="magnet" label="スナップ" className="w-[19px]" />
            <button aria-label="スナップ設定" className="flex h-full w-[31px] items-center justify-center gap-px bg-[#282828]">
              <Icon name="snapgrid" />
              <Chevron />
            </button>
          </div>
          <div className={group}>
            <Square icon="overlay" label="オーバーレイ" tone="bg-[#4772b3]" className="w-[18px]" />
            <button aria-label="オーバーレイ設定" className="flex h-full w-5 items-center justify-center bg-[#282828]">
              <Chevron />
            </button>
          </div>
        </div>
      </div>
      <div className="relative min-h-0 flex-1 overflow-hidden">
        <Links />
        <div className="relative flex h-11 items-center pl-[18px] whitespace-nowrap">
          <Crumb icon="object">Cube</Crumb>
          <Arrow className="mr-2 ml-[15px]" />
          <Crumb icon="nodes">ジオメトリノード</Crumb>
          <Arrow className="mr-2 ml-[15px]" />
          <Crumb icon="tree">ジオメトリノード</Crumb>
        </div>
        <Arrow className="absolute top-[18px] left-0 size-2 text-[#aaa]" />

        <Node title="グループ入力" head="bg-[#1d1d1d]" className={`top-[39px] -left-[72px] w-[148px] ${darkRing}`}>
          <Out label="ジオメトリ" color={geo} />
          <Out shape="ring" />
        </Node>

        <Node title="グリッド" head="bg-[#1d725e]" className={`top-[41px] left-[161px] w-[148px] ${darkRing}`}>
          <Out label="メッシュ" color={geo} />
          <Out label="UVマップ" color={vec} shape="diamond" />
          <div className="pt-[3px] pb-px">
            <Field label="サイズX" value="4 m" color={flt} />
            <Field label="サイズY" value="3 m" color={flt} />
            <Field label="頂点 X" value="5" color={int} />
            <Field label="頂点 Y" value="4" color={int} />
          </div>
        </Node>

        <Node title="メッシュ細分化" head="bg-[#1d725e]" className={`top-[63px] left-[394px] w-[148px] ${darkRing}`}>
          <Out label="メッシュ" color={geo} />
          <div className="pt-[3px] pb-px">
            <In label="メッシュ" color={geo} />
            <Field label="レベル" value="6" color={int} />
          </div>
        </Node>

        <Node title="画像テクスチャ" head="bg-[#79461d]" className={`top-[197px] left-[346px] w-[254px] ${darkRing}`}>
          <Out label="カラー" color="#c7c729" shape="diamond" />
          <Out label="アルファ" color={flt} shape="diamond" />
          <div className="pt-1">
            <div className="flex h-[26px] items-center px-[11px]">
              <Pick label="補間" options={["リニア", "近接"]} className="w-full" pad="pl-[7px]" />
            </div>
            <div className="flex h-[26px] items-center px-[11px]">
              <Pick label="延長方法" options={["延長", "リピート"]} className="w-full" pad="pl-[7px]" />
            </div>
            <div className="relative flex h-[23px] items-center px-[11px]">
              <div className={`${group} w-full`}>
                <button aria-label="画像" className="flex h-full w-8 shrink-0 items-center justify-center bg-[#282828]">
                  <Icon name="image" />
                  <Chevron />
                </button>
                <input aria-label="画像名" defaultValue="image05.png" className="h-full w-0 flex-1 bg-[#1d1d1d] pl-[6px]" />
                <Square icon="shield" label="フェイクユーザー" className="w-[21px] border-r border-[#3d3d3d]" />
                <Square icon="copy" label="新規" className="w-[21px] border-r border-[#3d3d3d]" />
                <Square icon="folder" label="開く" className="w-[21px] border-r border-[#3d3d3d]" />
                <Square icon="x" label="リンク解除" size="size-3" />
              </div>
              <Socket color="#633863" />
            </div>
            <In label="ベクトル" color={vec} shape="diamond" />
            <Field label="フレーム" value="0" color={int} />
          </div>
        </Node>

        <Node title="XYZ合成" head="bg-[#246283]" className="top-[207px] left-[684px] w-[148px] ring-white">
          <Out label="ベクトル" color={vec} shape="diamond" />
          <div className="pt-[3px] pb-px">
            <Field label="X" value="0.000" color={flt} shape="dot" />
            <Field label="Y" value="0.000" color={flt} shape="dot" />
            <In label="Z" color={flt} shape="diamond" />
          </div>
        </Node>

        <Node title="位置設定" head="bg-[#1d725e]" className={`top-[86px] left-[917px] w-[148px] ${darkRing}`}>
          <Out label="ジオメトリ" color={geo} />
          <div className="pt-[3px] pb-px">
            <In label="ジオメトリ" color={geo} />
            <In label="選択" color="#cca6d6" shape="dot" />
            <In label="位置" color={vec} shape="diamond" />
            <In label="オフセット" color={vec} shape="diamond" />
          </div>
        </Node>

        <Node title="グループ出力" head="bg-[#1d1d1d]" className={`top-[40px] left-[1149px] w-[148px] ${darkRing}`}>
          <In label="ジオメトリ" color={geo} />
          <In shape="ring" />
        </Node>

        <div className="absolute top-[298px] left-[664px] z-20 h-[45px] w-[52px] border-[5px] border-[#f00]" />
        <i className="absolute right-[9px] bottom-[3px] left-[78px] h-[3px] rounded bg-[#333]" />
        <i className="absolute top-[10px] right-[2px] bottom-3 w-[3px] rounded bg-[#333]" />
        <button aria-label="サイドバー" className="absolute top-4 right-0 rounded-l bg-[#1a1a1a] py-px text-[#aaa]">
          <Arrow className="size-2 rotate-180" />
        </button>
      </div>
    </section>
  );
}

/* ---------- timeline ---------- */

const frames = Array.from({ length: 25 }, (_, i) => (i + 1) * 10);

function Timeline() {
  return (
    <section className="relative flex min-h-0 min-w-0 flex-col overflow-hidden rounded-md bg-[#1d1d1d]">
      <div className="grid h-[25px] shrink-0 grid-cols-[599px_1fr_auto] items-center bg-[#303030] pt-px">
        <div className="flex items-center pl-[7px]">
          <IconMenu icon="clock" label="エディタータイプ" />
          <div className={`${group} ml-[5px] bg-[#282828]`}>
            <button className="flex h-full items-center gap-1 border-r border-[#3d3d3d] pr-[3px] pl-[6px] whitespace-nowrap">
              再生 <Chevron />
            </button>
            <button className="flex h-full items-center gap-1 pr-[3px] pl-[7px] whitespace-nowrap">
              キーイング <Chevron />
            </button>
          </div>
          <Menus items={["ビュー", "マーカー"]} className="ml-[2px]" />
        </div>
        <div className="flex items-center gap-[6px]">
          <div className={group}>
            <Square icon="record" label="自動キー挿入" className="w-[19px]" />
            <button aria-label="自動キー設定" className="flex h-full w-[18px] items-center justify-center bg-[#303030] text-[#666]">
              <Chevron />
            </button>
          </div>
          <div className="flex h-5 gap-px overflow-hidden rounded">
            {[["first", "先頭"], ["prevkey", "前のキー"], ["rev", "逆再生"], ["play", "再生"], ["nextkey", "次のキー"], ["last", "末尾"]].map(([i, l]) => (
              <Square key={i} icon={i} label={l} className="w-[19px]" />
            ))}
          </div>
        </div>
        <div className="flex items-center gap-[6px] pr-[6px]">
          <input aria-label="現在のフレーム" defaultValue="1" className="h-5 w-[74px] rounded bg-[#545454] text-center" />
          <div className={group}>
            <Square icon="stopwatch" label="プレビュー範囲" className={ruled} />
            <label className="flex h-full w-[86px] items-center border-r border-[#3d3d3d] bg-[#545454] px-[14px]">
              <span className="whitespace-nowrap">開始</span>
              <input defaultValue="1" className="w-0 flex-1 bg-transparent text-right" />
            </label>
            <label className="flex h-full w-[86px] items-center bg-[#545454] px-[14px]">
              <span className="whitespace-nowrap">終了</span>
              <input defaultValue="250" className="w-0 flex-1 bg-transparent text-right" />
            </label>
          </div>
        </div>
      </div>
      <div className="flex h-[23px] shrink-0 items-center pt-px pr-[27px] pl-[70px] text-[#a8a8a8]">
        {frames.map((f) => (
          <span key={f} className="flex-1 text-center">
            {f}
          </span>
        ))}
      </div>
      <div className="flex min-h-0 flex-1 bg-[#232323]">
        <i className="ml-[51px] w-5 bg-[#303030]" />
        <div className="mr-[26px] flex flex-1">
          {frames.map((f) => (
            <i key={f} className={`flex flex-1 border-l border-[#252525] ${f === 250 ? "" : "bg-[#303030]"}`}>
              <i className="w-1/2 border-r border-[#141414] bg-[#303030]" />
            </i>
          ))}
        </div>
      </div>
      <i className="absolute bottom-0 left-[50px] h-7 w-[2px] bg-[#4772b3]" />
      <i className="absolute right-[9px] bottom-[3px] left-[9px] h-[7px] rounded-full bg-[#545454]/95" />
      <i className="absolute bottom-[3px] left-[9px] size-[7px] rounded-full border border-[#777] bg-[#2a2a2a]" />
      <i className="absolute right-[9px] bottom-[3px] size-[7px] rounded-full border border-[#777] bg-[#2a2a2a]" />
      <span className="absolute top-7 left-[38px] flex h-[17px] w-6 items-center justify-center rounded bg-[#4772b3] text-white">1</span>
      <Arrow className="absolute top-[43px] left-0 size-2 text-[#aaa]" />
      <i className="absolute top-[35px] right-[2px] h-7 w-[3px] rounded bg-[#333]" />
      <Arrow className="absolute top-[43px] right-0 size-2 rotate-180 text-[#aaa]" />
    </section>
  );
}

/* ---------- outliner ---------- */

function Toggle({ on }) {
  return (
    <svg viewBox="0 0 8 8" className={`size-2 shrink-0 text-[#bbb] ${on ? "" : "-rotate-90"}`} aria-hidden="true">
      <path d="M.500 1h7L4 7.500z" fill="currentColor" />
    </svg>
  );
}

function Visibility({ check }) {
  return (
    <div className="ml-auto flex items-center gap-[6px] pr-3 text-[#e6e6e6]">
      {check && (
        <label className="relative flex size-[11px] items-center justify-center">
          <input type="checkbox" defaultChecked aria-label="ビューレイヤーに含める" className="size-[11px] appearance-none rounded-[2px] bg-[#e6e6e6]" />
          <svg viewBox="0 0 10 10" className="pointer-events-none absolute size-[9px]" aria-hidden="true">
            <path d="M1.500 5l2.500 2.500L8.500 2" fill="none" stroke="#222" strokeWidth="1.600" />
          </svg>
        </label>
      )}
      <button aria-label="ビューポートで隠す">
        <Icon name="eye" className="size-[15px]" />
      </button>
      <button aria-label="レンダーで無効">
        <Icon name="photo" className="size-[14px]" />
      </button>
    </div>
  );
}

function Outliner() {
  const row = "flex h-5 shrink-0 items-center whitespace-nowrap";
  return (
    <section className="relative flex min-h-0 min-w-0 flex-col overflow-hidden rounded-md bg-[#282828]">
      <div className="flex h-[26px] shrink-0 items-center bg-[#2b2b2b] pr-[6px] pl-[7px]">
        <IconMenu icon="outliner" label="エディタータイプ" />
        <IconMenu icon="layers" label="表示モード" className="ml-[5px]" />
        <label className="ml-4 flex h-5 w-[116px] items-center rounded border border-[#3d3d3d] bg-[#1d1d1d] pl-1">
          <Icon name="search" className="size-[15px]" />
          <input aria-label="検索" className="w-0 flex-1 bg-transparent" />
        </label>
        <IconMenu icon="filter" label="フィルター" className="ml-auto" />
        <div className={`${group} ml-[5px]`}>
          <Square icon="newcol" label="新規コレクション" tone="bg-[#464646]" className="w-[18px]" />
        </div>
      </div>
      <div className={`${row} mt-px gap-[6px] bg-[#2b2b2b] pl-[23px] text-[#b0b0b0]`}>
        <Icon name="box" className="size-[15px] text-[#dcdcdc]" />
        シーンコレクション
      </div>
      <div className={`${row} bg-[#282828] pl-[25px]`}>
        <Toggle on />
        <span className="mr-[5px] ml-2 flex size-[18px] items-center justify-center rounded bg-[#5c5c5c]">
          <Icon name="box" className="size-[14px]" />
        </span>
        <span className="text-[#bdbdbd]">Collection</span>
        <Visibility check />
      </div>
      <div className={`${row} bg-[#2b2b2b] pl-[46px]`}>
        <Toggle />
        <Icon name="moviecam" className="mr-[6px] ml-2 size-4 text-[#c77f4a]" />
        <span className="w-[61px] text-[#bdbdbd]">Camera</span>
        <span className="flex h-[18px] w-5 items-center justify-center rounded bg-[#5c5c5c] text-[#00bd90]">
          <Icon name="moviecamline" className="size-[15px]" />
        </span>
        <Visibility />
      </div>
      <div className={`${row} bg-[#334d80] pl-[46px]`}>
        <Toggle />
        <span className="mr-[5px] ml-[6px] flex h-[18px] w-[19px] items-center justify-center rounded bg-[#60739a]">
          <Icon name="tri" className="size-[14px] text-[#e0955f]" />
        </span>
        <span className="w-[51px] text-[#ffaf29]">Cube</span>
        <Icon name="wrenchline" className="size-[14px] text-[#6c8ee0]" />
        <Icon name="mesh" className="ml-[6px] size-[15px] text-[#00d6a3]" />
        <Visibility />
      </div>
      <div className={`${row} bg-[#2b2b2b] pl-[46px]`}>
        <Toggle />
        <Icon name="bulb" className="mr-[6px] ml-2 size-4 text-[#c77f4a]" />
        <span className="w-[48px] text-[#bdbdbd]">Light</span>
        <Icon name="lightdata" className="size-[15px] text-[#00bd90]" />
        <Visibility />
      </div>
      {[0, 1, 2, 3, 4, 5, 6].map((i) => (
        <div key={i} className={`h-5 shrink-0 ${i % 2 ? "bg-[#2b2b2b]" : "bg-[#282828]"}`} />
      ))}
      <i className="absolute top-[71px] left-[29px] h-[50px] w-px bg-[#666]" />
    </section>
  );
}

/* ---------- properties ---------- */

const tabs = [
  [["tool", "ツール", "text-[#b8b8b8]"]],
  [
    ["render", "レンダー", "text-[#b8b8b8]"],
    ["output", "出力", "text-[#b8b8b8]"],
    ["layers", "ビューレイヤー", "text-[#b8b8b8]"],
    ["drops", "シーン", "text-[#b8b8b8]"],
    ["world", "ワールド", "text-[#b9545c]"],
  ],
  [["boxline", "コレクション", "text-[#e0e0e0]"]],
  [
    ["object", "オブジェクト", "text-[#c7823f]"],
    ["wrench", "モディファイアー", "text-[#6f9cf8]"],
    ["particles", "パーティクル", "text-[#5f84cf]"],
    ["physics", "物理演算", "text-[#5f84cf]"],
    ["constraint", "コンストレイント", "text-[#5f84cf]"],
    ["mesh", "データ", "text-[#00bd90]"],
    ["material", "マテリアル", "text-[#b9545c]"],
  ],
  [["texture", "テクスチャ", "text-[#b9545c]"]],
];

function Properties() {
  return (
    <section className="flex min-h-0 min-w-0 flex-col overflow-hidden rounded-md bg-[#303030]">
      <div className="flex h-[25px] shrink-0 items-center pr-[7px] pl-2">
        <IconMenu icon="props" label="エディタータイプ" />
        <label className="ml-[44px] flex h-5 w-[116px] items-center rounded border border-[#3d3d3d] bg-[#1d1d1d] pl-1">
          <Icon name="search" className="size-[15px]" />
          <input aria-label="プロパティ検索" className="w-0 flex-1 bg-transparent" />
        </label>
        <button aria-label="オプション" className={`${dark} ml-auto w-5 justify-center`}>
          <Chevron />
        </button>
      </div>
      <div className="flex min-h-0 flex-1">
        <nav className="flex w-7 shrink-0 flex-col gap-[7px] bg-[#1d1d1d] pt-2">
          {tabs.map((g) => (
            <div key={g[0][0]} className="flex flex-col border-b border-[#181818] pl-[2px]">
              {g.map(([icon, label, color]) => (
                <button
                  key={icon}
                  aria-label={label}
                  className={`flex h-7 w-[26px] items-center justify-center rounded-l pr-px ${color} ${icon === "wrench" ? "bg-[#303030]" : ""}`}
                >
                  <Icon name={icon} className="size-[15px]" />
                </button>
              ))}
            </div>
          ))}
        </nav>
        <div className="min-w-0 flex-1 pr-2 pl-2">
          <div className="flex h-9 items-center pr-px pl-[3px]">
            <Icon name="object" className="size-[15px]" />
            <span className="ml-2">Cube</span>
            <Arrow className="mr-2 ml-[14px]" />
            <Icon name="nodes" className="size-[15px]" />
            <span className="ml-[7px] whitespace-nowrap">ジオメトリノード</span>
            <Icon name="pin" className="ml-auto size-[15px] text-[#989898]" />
          </div>
          <button className="mt-2 flex h-5 w-full items-center rounded bg-[#545454] px-[7px]">
            <svg viewBox="0 0 10 10" className="size-[10px]" aria-hidden="true">
              <path d="M5 0v10M0 5h10" stroke="currentColor" strokeWidth="1.200" />
            </svg>
            <span className="flex-1 pl-2 text-center">モディファイアーを追加</span>
          </button>
          <div className="mt-[10px] rounded border border-[#4772b3] bg-[#3d3d3d]">
            <div className="flex h-6 items-center px-[6px]">
              <svg viewBox="0 0 10 10" className="size-[10px] text-[#aaa]" aria-hidden="true">
                <path d="M1 3l4 4.500L9 3" fill="none" stroke="currentColor" strokeWidth="1.200" />
              </svg>
              <Icon name="nodes" className="ml-[6px] size-[15px]" />
              <div className="ml-[11px] flex h-[18px] gap-px overflow-hidden rounded">
                <input aria-label="モディファイアー名" defaultValue="ジオ…" className="w-[45px] bg-[#1d1d1d] pl-[6px]" />
                <Square icon="mesh" label="編集ケージ" className="w-[19px]" size="size-[15px]" />
                <Square icon="editmode" label="編集モード" tone="bg-[#4772b3]" className="w-[19px]" size="size-[15px]" />
                <Square icon="monitor" label="リアルタイム" tone="bg-[#4772b3]" className="w-[19px]" size="size-[15px]" />
                <Square icon="photoblue" label="レンダー" tone="bg-[#4772b3]" className="w-[19px]" size="size-[15px]" />
                <button aria-label="詳細" className="flex w-[19px] items-center justify-center bg-[#282828]">
                  <Chevron />
                </button>
              </div>
              <button aria-label="モディファイアーを削除" className="ml-[3px] flex w-4 justify-center">
                <Icon name="x" className="size-3" />
              </button>
              <svg viewBox="0 0 12 6" className="ml-auto h-[6px] w-3" aria-hidden="true">
                <path d="M0 1h12M0 4h12" stroke="#aaa" strokeWidth="1.200" strokeDasharray="1.200 1.800" />
              </svg>
            </div>
            <div className="mt-2 flex h-[19px] gap-px overflow-hidden rounded px-2">
              <button aria-label="ノードグループ" className="flex w-[30px] items-center justify-center rounded-l bg-[#282828]">
                <Icon name="tree" className="size-[15px]" />
                <Chevron />
              </button>
              <input aria-label="ノードグループ名" defaultValue="ジオメトリノード" className="w-0 flex-1 bg-[#1d1d1d] pl-[7px]" />
              <Square icon="shield" label="フェイクユーザー" className="w-[19px]" size="size-[15px]" />
              <Square icon="copy" label="新規" className="w-[19px]" size="size-[15px]" />
              <Square icon="x" label="リンク解除" className="w-[19px] rounded-r" size="size-3" />
            </div>
            <div className="mt-[9px]">
              {["出力属性", "内部依存"].map((t) => (
                <button key={t} className="flex h-[25px] w-full items-center gap-1 pl-[21px]">
                  <Arrow className="text-[#aaa]" />
                  {t}
                </button>
              ))}
            </div>
          </div>
        </div>
      </div>
    </section>
  );
}

/* ---------- status bar ---------- */

function StatusBar() {
  return (
    <footer className="flex h-[21px] shrink-0 items-center bg-[#181818] pt-px pr-3 pl-[9px] whitespace-nowrap text-[#989898]">
      {[["mouseL", "選択"], ["mouseM", "視点の移動"], ["mouseR", "ノード"]].map(([i, t]) => (
        <span key={i} className="flex w-[211px] shrink-0 items-center gap-[9px]">
          <Icon name={i} />
          {t}
        </span>
      ))}
      <span className="ml-auto">
        Collection | Cube | 頂点:49,601 | 面:49,152 | 三角面:98,304 | オブジェクト:1/3 | 期間：&nbsp;00:10+10 (フレーム 1/250) | 4.0.2
      </span>
    </footer>
  );
}

export default function App() {
  return (
    <div className="flex h-screen min-h-[900px] flex-col overflow-hidden bg-[#151515] font-['Inter','Noto_Sans_CJK_JP',sans-serif] text-[11px] text-[#e0e0e0] [text-shadow:0_1px_1px_rgba(0,0,0,.5)]">
      <TopBar />
      <main className="flex min-h-0 flex-1 gap-[3px] px-px">
        <div className="grid min-w-0 flex-1 grid-cols-1 grid-rows-[minmax(0,436fr)_minmax(0,435fr)_72px] gap-[3px]">
          <div className="grid min-h-0 grid-cols-[minmax(0,573fr)_minmax(0,810fr)] grid-rows-1 gap-[3px]">
            <Spreadsheet />
            <Viewport />
          </div>
          <NodeEditor />
          <Timeline />
        </div>
        <div className="grid w-[289px] shrink-0 grid-rows-[minmax(0,269fr)_minmax(0,677fr)] gap-[3px]">
          <Outliner />
          <Properties />
        </div>
      </main>
      <StatusBar />
    </div>
  );
}
